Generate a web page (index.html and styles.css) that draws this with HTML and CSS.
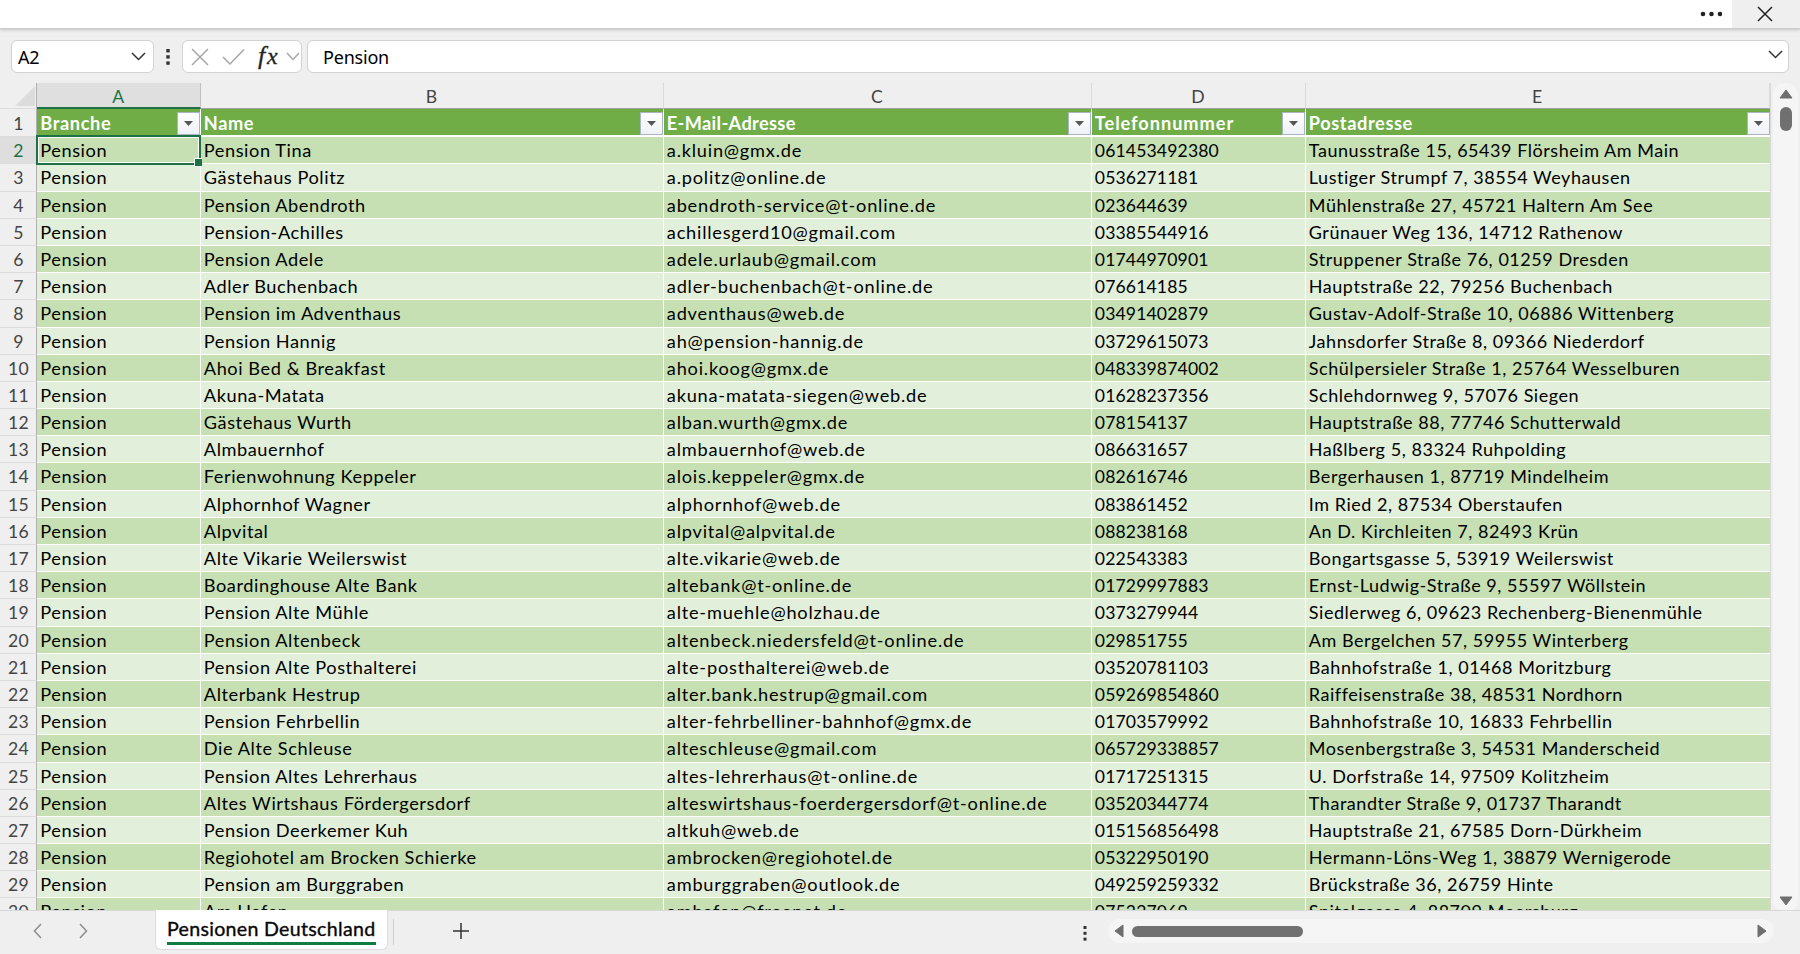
FILE: index.html
```html
<!DOCTYPE html>
<html lang="de">

<head>
  <meta charset="utf-8">
  <title>Pensionen Deutschland</title>
  <link rel="stylesheet" href="styles.css">
</head>

<body>
  <div class="titlebar">
    <svg class="more" width="22" height="8"><circle cx="3" cy="4" r="2.3"/><circle cx="11.5" cy="4" r="2.3"/><circle cx="20" cy="4" r="2.3"/></svg>
    <div class="close">
      <svg width="16" height="16"><path d="M1 1L15 15M15 1L1 15"/></svg>
    </div>
  </div>

  <div class="formulabar">
    <div class="box namebox">
      <span>A2</span>
      <svg class="chev" width="15" height="9"><path d="M1 1L7.5 7.5L14 1"/></svg>
    </div>
    <svg class="dots" width="4" height="18"><rect x="0.3" y="1" width="3.4" height="3.4"/><rect x="0.3" y="7.2" width="3.4" height="3.4"/><rect x="0.3" y="13.4" width="3.4" height="3.4"/></svg>
    <div class="box tools">
      <svg class="gray" width="18" height="18"><path d="M1 1L17 17M17 1L1 17"/></svg>
      <svg class="gray check" width="23" height="18"><path d="M1 9L8 16L22 1.5"/></svg>
      <span class="fx"><i class="f">f</i><i>x</i></span>
      <svg class="gray" width="14" height="9"><path d="M1 1L7 7.5L13 1"/></svg>
    </div>
    <div class="box formula">
      <span>Pension</span>
      <svg class="chev" width="15" height="9"><path d="M1 1L7.5 7.5L14 1"/></svg>
    </div>
  </div>

  <div class="main">
    <div class="sheet">
      <div class="row letters">
        <div class="num corner"><svg width="20" height="20"><path d="M20 0V20H0Z"/></svg></div>
        <div class="active">A</div>
        <div>B</div>
        <div>C</div>
        <div>D</div>
        <div>E</div>
      </div>
      <div id="rows"></div>
      <div class="selection"></div>
    </div>
    <div class="vscroll">
      <svg width="14" height="10"><path d="M7 1L13 9H1Z"/></svg>
      <div class="thumb"></div>
      <svg class="down" width="14" height="10"><path d="M1 1H13L7 9Z"/></svg>
    </div>
  </div>

  <div class="bottombar">
    <div class="nav">
      <svg width="9" height="16"><path d="M8 1L1.5 8L8 15"/></svg>
      <svg width="9" height="16"><path d="M1 1L7.5 8L1 15"/></svg>
    </div>
    <div class="tab"><span>Pensionen Deutschland</span></div>
    <div class="sep"></div>
    <svg class="plus" width="16" height="16"><path d="M8 0V16M0 8H16"/></svg>
    <svg class="dots" width="4" height="15"><rect x="0.5" y="0" width="3" height="3"/><rect x="0.5" y="5.8" width="3" height="3"/><rect x="0.5" y="11.6" width="3" height="3"/></svg>
    <div class="hscroll">
      <svg width="10" height="14"><path d="M9 1V13L1 7Z"/></svg>
      <div class="thumb"></div>
      <svg class="right" width="10" height="14"><path d="M1 1V13L9 7Z"/></svg>
    </div>
  </div>

  <script src="rows.js"></script>
</body>

</html>
```

FILE: styles.css
```css
* {
  box-sizing: border-box;
}
body {
  margin: 0;
  width: 1800px;
  height: 954px;
  overflow: hidden;
  display: flex;
  flex-direction: column;
  background: #efefef;
  font-family: Lato, "Liberation Sans", sans-serif;
  color: #000;
}
svg {
  display: block;
  flex: none;
  fill: none;
  stroke-width: 1.5;
}

/* title bar */
.titlebar {
  height: 28px;
  flex: none;
  display: flex;
  justify-content: flex-end;
  align-items: center;
  background: #fff;
  box-shadow: 0 1px 3px 1px #c4c4c4;
}
.more {
  fill: #222;
  margin-right: 10px;
}
.close {
  width: 68px;
  height: 28px;
  padding: 6px 0 0 25px;
  background: #efefef;
}
.close svg {
  stroke: #222;
}

/* formula bar */
.formulabar {
  height: 55px;
  flex: none;
  display: flex;
  align-items: flex-start;
  padding: 12px 11px 0 11px;
  font-family: "Noto Sans", sans-serif;
  font-size: 18px;
  letter-spacing: -0.2px;
}
.box {
  height: 33px;
  display: flex;
  align-items: center;
  background: #fff;
  border: 1px solid #d2d2d2;
  border-radius: 6px;
}
.namebox {
  width: 143px;
  justify-content: space-between;
  padding: 0 7px 0 6px;
}
.chev {
  stroke: #333;
}
.formulabar .dots {
  margin: 8px 12px 0 12px;
}
.dots {
  fill: #333;
}
.tools {
  width: 120px;
  padding-left: 8px;
}
.gray {
  stroke: #a6a6a6;
}
.check {
  margin-left: 13px;
}
.fx {
  width: 24px;
  margin: -2px 4px 0 13px;
  font-family: "Liberation Serif", serif;
  font-size: 24px;
  color: #222;
  -webkit-text-stroke: 0.3px #222;
}
.fx .f {
  font-size: 26px;
  margin-right: 2px;
}
.formula {
  flex: 1;
  margin-left: 5px;
  justify-content: space-between;
  padding: 0 5px 0 15px;
}
.formula .chev {
  margin-top: -4px;
}

/* grid */
.main {
  height: 827px;
  flex: none;
  display: flex;
}
.sheet {
  position: relative;
  width: 1771px;
  height: 827px;
  overflow: hidden;
  border-right: 1px solid #d8d8d8;
}
.row {
  display: grid;
  grid-template-columns: 37px 163.5px 463px 428px 214px 464.5px;
  height: 27.19px;
  font-size: 17.6px;
  line-height: 27px;
  letter-spacing: 0.3px;
  white-space: nowrap;
}
.row > div {
  overflow: hidden;
  border-right: 1px solid #fff;
  border-bottom: 1px solid #fff;
  padding-left: 3.3px;
}
.row > div:last-child {
  border-right: none;
}
.row > .text {
  font-size: 18.2px;
  letter-spacing: 0.56px;
}
.row > .mail {
  font-size: 18.2px;
  letter-spacing: 0.79px;
}
.row > .phone {
  letter-spacing: 0.14px;
}
.row > .address {
  font-size: 18px;
  letter-spacing: 0.54px;
}
.row.even > div {
  background: #c6e0b4;
}
.row.odd > div {
  background: #e2efda;
}
.row > .num.num {
  background: #efefef;
  color: #444;
  text-align: center;
  padding: 0 0 0 1px;
  border-right: 1px solid #b0b0b0;
  border-bottom: 1px solid #dcdcdc;
}
.row > .num.current.current {
  background: #dedede;
  color: #1e7145;
}
.letters.row {
  height: 26px;
}
.letters.row > div {
  border-right: 1px solid #dadada;
  border-bottom: 1px solid #a0a0a0;
  padding: 0;
  text-align: center;
  color: #444;
  line-height: 28px;
}
.letters.row > .active {
  background: #dfdfdf;
  color: #1e7145;
  border-bottom: 2px solid #1e7145;
  border-right-color: #c0c0c0;
}
.letters.row > .corner {
  border-bottom-color: #dcdcdc;
}
.corner svg {
  fill: #dcdcdc;
  margin: 3px 0 0 14px;
}
.head.row {
  height: 28.2px;
  line-height: 29px;
}
.row.head > div {
  display: flex;
  justify-content: space-between;
  background: #70ad47;
  border-bottom: 2px solid #fff;
  color: #fff;
  font-size: 18.2px;
  font-weight: bold;
  letter-spacing: 0.6px;
}
.row.head > .mail {
  letter-spacing: 0.35px;
}
.row.head > .phone {
  letter-spacing: 0.95px;
}
.row.head > .num {
  display: block;
  font-size: 17.6px;
  font-weight: normal;
  letter-spacing: 0.3px;
}
.filter {
  width: 23px;
  height: 23px;
  margin-top: 3px;
  background: linear-gradient(#fff, #eef1f6);
  border: 1px solid #a9b4c4;
  display: flex;
  align-items: center;
  justify-content: center;
}
.filter svg {
  fill: #555;
}
.selection {
  position: absolute;
  left: 36px;
  top: 52px;
  width: 165px;
  height: 30px;
  border: 2px solid #1e7145;
  box-shadow: inset 0 0 0 1px #fff;
}
.selection::after {
  content: "";
  position: absolute;
  right: -3px;
  bottom: -3px;
  width: 7px;
  height: 7px;
  background: #1e7145;
  border: solid #fff;
  border-width: 1px 0 0 1px;
}

/* scroll bars */
.vscroll {
  width: 25px;
  height: 829px;
  margin-left: 2px;
  padding: 6px 0;
  display: flex;
  flex-direction: column;
  align-items: center;
  background: #f5f5f5;
  border-radius: 12px;
}
.vscroll svg,
.hscroll svg {
  fill: #6e6e6e;
  stroke: #6e6e6e;
  stroke-width: 1;
  stroke-linejoin: round;
}
.vscroll .thumb {
  width: 12px;
  height: 24px;
  margin-top: 8px;
}
.thumb {
  background: #707070;
  border-radius: 6px;
}
.down {
  margin-top: auto;
}
.hscroll {
  width: 666px;
  height: 24px;
  margin: 8px 26px 0 auto;
  padding: 0 7px 0 6px;
  display: flex;
  align-items: center;
  background: #f5f5f5;
  border-radius: 12px;
}
.hscroll .thumb {
  width: 171px;
  height: 11px;
  margin-left: 8px;
}
.right {
  margin-left: auto;
}

/* sheet tabs */
.bottombar {
  height: 44px;
  flex: none;
  display: flex;
  align-items: flex-start;
  border-top: 1px solid #d8d8d8;
}
.nav {
  width: 155px;
  display: flex;
  gap: 37px;
  padding: 12px 0 0 33px;
  stroke: #8c8c8c;
}
.tab {
  width: 233px;
  height: 40px;
  margin-top: -1px;
  padding: 4px 11px 0 11px;
  background: #fff;
  border: 1px solid #dcdcdc;
  border-top: none;
  border-radius: 0 0 6px 6px;
  font-size: 19.6px;
  letter-spacing: 0.3px;
  white-space: nowrap;
  -webkit-text-stroke: 0.4px #222;
}
.tab span {
  display: block;
  height: 31px;
  line-height: 29px;
  border-bottom: 3px solid #107c41;
}
.sep {
  width: 1px;
  height: 26px;
  margin: 8px 0 0 5px;
  background: #cfcfcf;
}
.plus {
  margin: 12px 0 0 59px;
  stroke: #333;
}
.bottombar .dots {
  margin: 15px 0 0 614px;
}
```

FILE: rows.js
```js
var heads = ["Branche", "Name", "E-Mail-Adresse", "Telefonnummer", "Postadresse"];
var classes = ["text", "text", "mail", "phone", "address"];
var data = [
  ["Pension Tina", "a.kluin@gmx.de", "061453492380", "Taunusstraße 15, 65439 Flörsheim Am Main"],
  ["Gästehaus Politz", "a.politz@online.de", "0536271181", "Lustiger Strumpf 7, 38554 Weyhausen"],
  ["Pension Abendroth", "abendroth-service@t-online.de", "023644639", "Mühlenstraße 27, 45721 Haltern Am See"],
  ["Pension-Achilles", "achillesgerd10@gmail.com", "03385544916", "Grünauer Weg 136, 14712 Rathenow"],
  ["Pension Adele", "adele.urlaub@gmail.com", "01744970901", "Struppener Straße 76, 01259 Dresden"],
  ["Adler Buchenbach", "adler-buchenbach@t-online.de", "076614185", "Hauptstraße 22, 79256 Buchenbach"],
  ["Pension im Adventhaus", "adventhaus@web.de", "03491402879", "Gustav-Adolf-Straße 10, 06886 Wittenberg"],
  ["Pension Hannig", "ah@pension-hannig.de", "03729615073", "Jahnsdorfer Straße 8, 09366 Niederdorf"],
  ["Ahoi Bed & Breakfast", "ahoi.koog@gmx.de", "048339874002", "Schülpersieler Straße 1, 25764 Wesselburen"],
  ["Akuna-Matata", "akuna-matata-siegen@web.de", "01628237356", "Schlehdornweg 9, 57076 Siegen"],
  ["Gästehaus Wurth", "alban.wurth@gmx.de", "078154137", "Hauptstraße 88, 77746 Schutterwald"],
  ["Almbauernhof", "almbauernhof@web.de", "086631657", "Haßlberg 5, 83324 Ruhpolding"],
  ["Ferienwohnung Keppeler", "alois.keppeler@gmx.de", "082616746", "Bergerhausen 1, 87719 Mindelheim"],
  ["Alphornhof Wagner", "alphornhof@web.de", "083861452", "Im Ried 2, 87534 Oberstaufen"],
  ["Alpvital", "alpvital@alpvital.de", "088238168", "An D. Kirchleiten 7, 82493 Krün"],
  ["Alte Vikarie Weilerswist", "alte.vikarie@web.de", "022543383", "Bongartsgasse 5, 53919 Weilerswist"],
  ["Boardinghouse Alte Bank", "altebank@t-online.de", "01729997883", "Ernst-Ludwig-Straße 9, 55597 Wöllstein"],
  ["Pension Alte Mühle", "alte-muehle@holzhau.de", "0373279944", "Siedlerweg 6, 09623 Rechenberg-Bienenmühle"],
  ["Pension Altenbeck", "altenbeck.niedersfeld@t-online.de", "029851755", "Am Bergelchen 57, 59955 Winterberg"],
  ["Pension Alte Posthalterei", "alte-posthalterei@web.de", "03520781103", "Bahnhofstraße 1, 01468 Moritzburg"],
  ["Alterbank Hestrup", "alter.bank.hestrup@gmail.com", "059269854860", "Raiffeisenstraße 38, 48531 Nordhorn"],
  ["Pension Fehrbellin", "alter-fehrbelliner-bahnhof@gmx.de", "01703579992", "Bahnhofstraße 10, 16833 Fehrbellin"],
  ["Die Alte Schleuse", "alteschleuse@gmail.com", "065729338857", "Mosenbergstraße 3, 54531 Manderscheid"],
  ["Pension Altes Lehrerhaus", "altes-lehrerhaus@t-online.de", "01717251315", "U. Dorfstraße 14, 97509 Kolitzheim"],
  ["Altes Wirtshaus Fördergersdorf", "alteswirtshaus-foerdergersdorf@t-online.de", "03520344774", "Tharandter Straße 9, 01737 Tharandt"],
  ["Pension Deerkemer Kuh", "altkuh@web.de", "015156856498", "Hauptstraße 21, 67585 Dorn-Dürkheim"],
  ["Regiohotel am Brocken Schierke", "ambrocken@regiohotel.de", "05322950190", "Hermann-Löns-Weg 1, 38879 Wernigerode"],
  ["Pension am Burggraben", "amburggraben@outlook.de", "049259259332", "Brückstraße 36, 26759 Hinte"],
  ["Am Hafen", "amhafen@freenet.de", "075327069", "Spitalgasse 4, 88709 Meersburg"]
];

function cell(text, cls) {
  var div = document.createElement("div");
  div.textContent = text;
  if (cls) div.className = cls;
  return div;
}

function addRow(num, cells, cls) {
  var row = cell("", "row " + cls);
  row.appendChild(cell(num, num == 2 ? "num current" : "num"));
  cells.forEach(function (text, i) {
    var c = cell(text, classes[i]);
    if (num == 1) {
      var btn = cell("", "filter");
      btn.innerHTML = '<svg width="9" height="5"><path d="M0 0H9L4.5 5Z"/></svg>';
      c.appendChild(btn);
    }
    row.appendChild(c);
  });
  document.querySelector("#rows").appendChild(row);
}

addRow(1, heads, "head");
data.forEach(function (d, i) {
  addRow(i + 2, ["Pension"].concat(d), i % 2 ? "odd" : "even");
});
```
